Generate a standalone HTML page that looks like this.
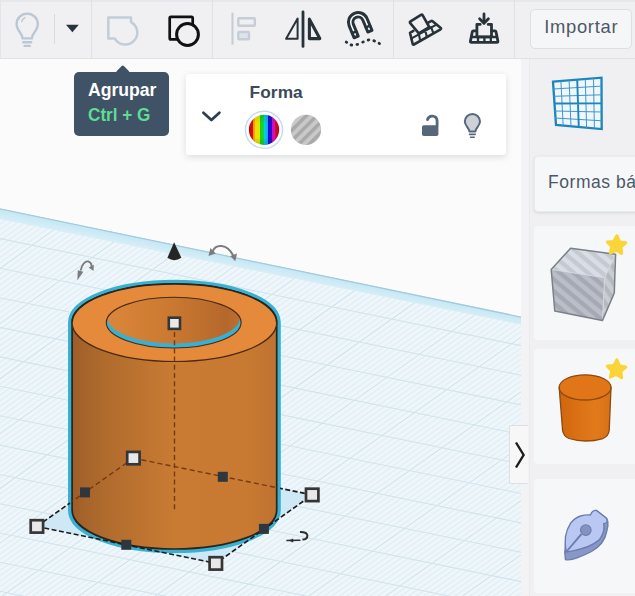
<!DOCTYPE html>
<html><head><meta charset="utf-8">
<style>
html,body{margin:0;padding:0;}
body{width:635px;height:596px;overflow:hidden;position:relative;background:#fbfbfb;font-family:"Liberation Sans",sans-serif;}
.abs{position:absolute;}
#toolbar{left:0;top:0;width:635px;height:59px;background:#f0f0f2;border-bottom:1px solid #e1e1e5;box-sizing:border-box;border-top:2px solid #e6e8ee;}
.vdiv{position:absolute;top:0;width:1px;height:58px;background:#e1e1e5;}
#viewport{left:0;top:58px;width:521px;height:538px;}
#side{left:521px;top:58px;width:114px;height:538px;background:#f0f0f2;border-left:8px solid #f3f3f5;box-sizing:border-box;}
#side:before{content:"";position:absolute;left:0;top:0;width:1px;height:538px;background:#eaeaee;}
.card{position:absolute;left:5px;width:110px;background:#f6f7f9;border-radius:4px;}
#tooltip{left:73.7px;top:72px;width:95.3px;height:64.4px;background:#3f5266;border-radius:5px;color:#fff;font-weight:bold;font-size:17px;}
#tooltip:before{content:"";position:absolute;left:44px;top:-5px;width:9.6px;height:9.6px;background:#3f5266;transform:rotate(45deg);border-radius:1.5px;}
#panel{left:186px;top:74px;width:320px;height:81px;background:#fff;border-radius:3px;box-shadow:0 2px 6px rgba(60,70,90,.17);}
#importbtn{left:530px;top:9px;width:102px;height:40px;box-sizing:border-box;border:1px solid #dcdfe4;border-radius:5px;background:#f5f6f8;color:#4d5966;font-size:18.4px;}
</style></head>
<body>
<!-- viewport -->
<svg class="abs" style="left:0;top:0" width="521" height="596" viewBox="0 0 521 596">
<defs>
<clipPath id="pl"><path d="M0 208.3L521 316.4V596H0Z"/></clipPath>
<linearGradient id="sideg" x1="0" x2="1" y1="0" y2="0">
<stop offset="0" stop-color="#9c5c29"/><stop offset="0.05" stop-color="#a5632b"/><stop offset="0.16" stop-color="#b06b2d"/><stop offset="0.5" stop-color="#c97b33"/><stop offset="0.85" stop-color="#c87a32"/><stop offset="1" stop-color="#bf7330"/>
</linearGradient>
<linearGradient id="inng" x1="0" x2="1" y1="0" y2="0">
<stop offset="0" stop-color="#da863a"/><stop offset="0.45" stop-color="#cc7a32"/><stop offset="0.9" stop-color="#b4682b"/><stop offset="1" stop-color="#bd6f2e"/>
</linearGradient>
<linearGradient id="bandg" gradientUnits="userSpaceOnUse" x1="0" y1="208.3" x2="-2.2" y2="219"><stop offset="0" stop-color="#c3e6f4"/><stop offset="1" stop-color="#d9eff8"/></linearGradient>
</defs>
<rect width="521" height="596" fill="#fbfbfb"/>
<!-- plane -->
<path d="M0 208.3L521 316.4V596H0Z" fill="#f0f7fb"/>
<g clip-path="url(#pl)">
<path d="M-2.0 596.8L4.0 598.0M-2.0 593.8L18.2 598.0M-2.0 588.0L46.5 598.0M-2.0 585.1L60.7 598.0M-2.0 582.2L74.9 598.0M-2.0 579.3L89.0 598.0M-2.0 576.4L103.2 598.0M-2.0 573.4L117.4 598.0M-2.0 570.5L131.6 598.0M-2.0 567.6L145.8 598.0M-2.0 564.7L159.9 598.0M-2.0 558.9L188.3 598.0M-2.0 556.0L202.5 598.0M-2.0 553.0L216.7 598.0M-2.0 550.1L230.9 598.0M-2.0 547.2L245.1 598.0M-2.0 544.3L259.3 598.0M-2.0 541.4L273.5 598.0M-2.0 538.4L287.7 598.0M-2.0 535.5L301.9 598.0M-2.0 529.7L330.3 598.0M-2.0 526.7L344.5 598.0M-2.0 523.8L358.7 598.0M-2.0 520.9L373.0 598.0M-2.0 518.0L387.2 598.0M-2.0 515.1L401.4 598.0M-2.0 512.1L415.6 598.0M-2.0 509.2L429.9 598.0M-2.0 506.3L444.1 598.0M-2.0 500.4L472.6 598.0M-2.0 497.5L486.8 598.0M-2.0 494.6L501.0 598.0M-2.0 491.6L515.3 598.0M-2.0 488.7L523.0 596.7M-2.0 485.8L523.0 593.7M-2.0 482.9L523.0 590.8M-2.0 479.9L523.0 587.9M-2.0 477.0L523.0 584.9M-2.0 471.1L523.0 579.1M-2.0 468.2L523.0 576.1M-2.0 465.3L523.0 573.2M-2.0 462.3L523.0 570.3M-2.0 459.4L523.0 567.3M-2.0 456.5L523.0 564.4M-2.0 453.5L523.0 561.5M-2.0 450.6L523.0 558.5M-2.0 447.7L523.0 555.6M-2.0 441.8L523.0 549.7M-2.0 438.9L523.0 546.8M-2.0 435.9L523.0 543.9M-2.0 433.0L523.0 540.9M-2.0 430.1L523.0 538.0M-2.0 427.1L523.0 535.1M-2.0 424.2L523.0 532.1M-2.0 421.2L523.0 529.2M-2.0 418.3L523.0 526.2M-2.0 412.4L523.0 520.4M-2.0 409.5L523.0 517.4M-2.0 406.5L523.0 514.5M-2.0 403.6L523.0 511.5M-2.0 400.7L523.0 508.6M-2.0 397.7L523.0 505.6M-2.0 394.8L523.0 502.7M-2.0 391.8L523.0 499.8M-2.0 388.9L523.0 496.8M-2.0 383.0L523.0 490.9M-2.0 380.1L523.0 488.0M-2.0 377.1L523.0 485.0M-2.0 374.2L523.0 482.1M-2.0 371.2L523.0 479.1M-2.0 368.3L523.0 476.2M-2.0 365.3L523.0 473.2M-2.0 362.4L523.0 470.3M-2.0 359.4L523.0 467.3M-2.0 353.5L523.0 461.4M-2.0 350.6L523.0 458.5M-2.0 347.6L523.0 455.5M-2.0 344.7L523.0 452.6M-2.0 341.7L523.0 449.6M-2.0 338.8L523.0 446.7M-2.0 335.8L523.0 443.7M-2.0 332.9L523.0 440.8M-2.0 329.9L523.0 437.8M-2.0 324.0L523.0 431.9M-2.0 321.1L523.0 429.0M-2.0 318.1L523.0 426.0M-2.0 315.2L523.0 423.1M-2.0 312.2L523.0 420.1M-2.0 309.2L523.0 417.1M-2.0 306.3L523.0 414.2M-2.0 303.3L523.0 411.2M-2.0 300.4L523.0 408.3M-2.0 294.5L523.0 402.4M-2.0 291.5L523.0 399.4M-2.0 288.5L523.0 396.4M-2.0 285.6L523.0 393.5M-2.0 282.6L523.0 390.5M-2.0 279.7L523.0 387.6M-2.0 276.7L523.0 384.6M-2.0 273.7L523.0 381.6M-2.0 270.8L523.0 378.7M-2.0 264.8L523.0 372.7M-2.0 261.9L523.0 369.8M-2.0 258.9L523.0 366.8M-2.0 256.0L523.0 363.8M-2.0 253.0L523.0 360.9M-2.0 250.0L523.0 357.9M-2.0 247.1L523.0 354.9M-2.0 244.1L523.0 352.0M-2.0 241.1L523.0 349.0M-2.0 235.2L523.0 343.1M-2.0 232.2L523.0 340.1M-2.0 229.3L523.0 337.1M-2.0 226.3L523.0 334.2M-2.0 223.3L523.0 331.2M-2.0 220.3L523.0 328.2M-2.0 217.4L523.0 325.3M-2.0 214.4L523.0 322.3M-2.0 211.4L523.0 319.3" stroke="#ecf5f9" stroke-width="0.7" fill="none"/>
<path d="M-2.0 208.9L-1.5 208.6M-2.0 220.0L10.5 211.0M-2.0 225.5L16.5 212.3M-2.0 231.1L22.5 213.5M-2.0 236.6L28.5 214.7M-2.0 242.2L34.4 215.9M-2.0 247.7L40.4 217.2M-2.0 253.3L46.4 218.4M-2.0 258.8L52.4 219.6M-2.0 264.3L58.4 220.9M-2.0 275.4L70.4 223.3M-2.0 280.9L76.4 224.6M-2.0 286.4L82.4 225.8M-2.0 292.0L88.4 227.0M-2.0 297.5L94.4 228.3M-2.0 303.0L100.4 229.5M-2.0 308.5L106.4 230.7M-2.0 314.1L112.4 232.0M-2.0 319.6L118.4 233.2M-2.0 330.6L130.4 235.7M-2.0 336.1L136.4 236.9M-2.0 341.7L142.4 238.1M-2.0 347.2L148.4 239.4M-2.0 352.7L154.4 240.6M-2.0 358.2L160.4 241.8M-2.0 363.7L166.4 243.1M-2.0 369.2L172.4 244.3M-2.0 374.7L178.4 245.5M-2.0 385.7L190.4 248.0M-2.0 391.2L196.3 249.2M-2.0 396.7L202.3 250.5M-2.0 402.2L208.3 251.7M-2.0 407.7L214.3 252.9M-2.0 413.2L220.3 254.1M-2.0 418.7L226.3 255.4M-2.0 424.2L232.3 256.6M-2.0 429.6L238.3 257.8M-2.0 440.6L250.3 260.3M-2.0 446.1L256.3 261.5M-2.0 451.6L262.3 262.8M-2.0 457.1L268.3 264.0M-2.0 462.5L274.3 265.2M-2.0 468.0L280.3 266.5M-2.0 473.5L286.3 267.7M-2.0 479.0L292.3 268.9M-2.0 484.4L298.3 270.2M-2.0 495.4L310.3 272.6M-2.0 500.8L316.3 273.9M-2.0 506.3L322.3 275.1M-2.0 511.8L328.3 276.3M-2.0 517.2L334.3 277.6M-2.0 522.7L340.3 278.8M-2.0 528.1L346.3 280.0M-2.0 533.6L352.3 281.3M-2.0 539.1L358.3 282.5M-2.0 550.0L370.3 285.0M-2.0 555.4L376.3 286.2M-2.0 560.9L382.3 287.4M-2.0 566.3L388.3 288.7M-2.0 571.8L394.3 289.9M-2.0 577.2L400.3 291.1M-2.0 582.6L406.3 292.4M-2.0 588.1L412.2 293.6M-2.0 593.5L418.2 294.8M7.0 598.0L430.2 297.3M14.7 598.0L436.2 298.5M22.3 598.0L442.2 299.7M30.0 598.0L448.2 301.0M37.6 598.0L454.2 302.2M45.3 598.0L460.2 303.4M52.9 598.0L466.2 304.7M60.6 598.0L472.2 305.9M68.2 598.0L478.2 307.1M83.6 598.0L490.2 309.6M91.2 598.0L496.2 310.8M98.9 598.0L502.2 312.1M106.5 598.0L508.2 313.3M114.2 598.0L514.2 314.5M121.9 598.0L520.2 315.8M129.5 598.0L523.0 319.3M137.2 598.0L523.0 324.8M144.9 598.0L523.0 330.2M160.2 598.0L523.0 341.2M167.9 598.0L523.0 346.7M175.5 598.0L523.0 352.1M183.2 598.0L523.0 357.6M190.9 598.0L523.0 363.1M198.5 598.0L523.0 368.5M206.2 598.0L523.0 374.0M213.9 598.0L523.0 379.5M221.5 598.0L523.0 384.9M236.9 598.0L523.0 395.9M244.6 598.0L523.0 401.3M252.2 598.0L523.0 406.8M259.9 598.0L523.0 412.2M267.6 598.0L523.0 417.7M275.3 598.0L523.0 423.1M282.9 598.0L523.0 428.6M290.6 598.0L523.0 434.0M298.3 598.0L523.0 439.5M313.6 598.0L523.0 450.4M321.3 598.0L523.0 455.8M329.0 598.0L523.0 461.3M336.7 598.0L523.0 466.7M344.4 598.0L523.0 472.1M352.0 598.0L523.0 477.6M359.7 598.0L523.0 483.0M367.4 598.0L523.0 488.4M375.1 598.0L523.0 493.9M390.5 598.0L523.0 504.7M398.2 598.0L523.0 510.1M405.8 598.0L523.0 515.6M413.5 598.0L523.0 521.0M421.2 598.0L523.0 526.4M428.9 598.0L523.0 531.8M436.6 598.0L523.0 537.3M444.3 598.0L523.0 542.7M452.0 598.0L523.0 548.1M467.4 598.0L523.0 558.9M475.1 598.0L523.0 564.3M482.8 598.0L523.0 569.7M490.5 598.0L523.0 575.2M498.2 598.0L523.0 580.6M505.8 598.0L523.0 586.0M513.5 598.0L523.0 591.4M521.2 598.0L523.0 596.8" stroke="#e2eff6" stroke-width="1.5" fill="none"/>
<path d="M-2.0 590.9L32.4 598.0M-2.0 561.8L174.1 598.0M-2.0 532.6L316.1 598.0M-2.0 503.4L458.3 598.0M-2.0 474.1L523.0 582.0M-2.0 444.7L523.0 552.7M-2.0 415.4L523.0 523.3M-2.0 385.9L523.0 493.9M-2.0 356.5L523.0 464.4M-2.0 327.0L523.0 434.9M-2.0 297.4L523.0 405.3M-2.0 267.8L523.0 375.7M-2.0 238.2L523.0 346.0M-2.0 208.5L523.0 316.3M-2.0 214.4L4.5 209.8M-2.0 269.9L64.4 222.1M-2.0 325.1L124.4 234.4M-2.0 380.2L184.4 246.8M-2.0 435.1L244.3 259.1M-2.0 489.9L304.3 271.4M-2.0 544.5L364.3 283.7M-0.6 598.0L424.2 296.0M75.9 598.0L484.2 308.4M152.5 598.0L523.0 335.7M229.2 598.0L523.0 390.4M306.0 598.0L523.0 444.9M382.8 598.0L523.0 499.3M459.7 598.0L523.0 553.5" stroke="#d1e3ec" stroke-width="1.1" fill="none"/>
<path d="M0 208.3L521 316.4V324.4L0 219.3Z" fill="url(#bandg)"/>
<path d="M0 208.8L521 316.9" stroke="#a3cbdb" stroke-width="1.5" fill="none"/>
</g>
<!-- selection footprint -->
<path d="M36.9 526.4L215.8 563.4L312.2 494.9L133.4 458.1Z" fill="#cfe8f5"/>
<!-- cylinder -->
<g>
<path d="M72.1 322.7A102.3 38.8 0 0 1 276.7 322.7V510.2A102.3 38.8 0 0 1 72.1 510.2Z" fill="#38b0d2" stroke="#38b0d2" stroke-width="8.2" stroke-linejoin="round"/>
<path d="M72.1 322.7A102.3 38.8 0 0 1 276.7 322.7V510.2A102.3 38.8 0 0 1 72.1 510.2Z" fill="none" stroke="#bfe9f6" stroke-width="10" stroke-linejoin="round" opacity=".0"/>
<path d="M72.1 322.7A102.3 38.8 0 0 1 276.7 322.7V510.2A102.3 38.8 0 0 1 72.1 510.2Z" fill="url(#sideg)" stroke="#2a241c" stroke-width="1.7"/>
<ellipse cx="174.4" cy="322.7" rx="102.3" ry="38.8" fill="#e5893b"/>
<path d="M72.1 322.7A102.3 38.8 0 0 0 276.7 322.7" fill="none" stroke="#4a2a12" stroke-width="1.2"/>
<path d="M72.1 322.7A102.3 38.8 0 0 1 276.7 322.7" fill="none" stroke="#2a241c" stroke-width="1.5"/>
<!-- hole -->
<clipPath id="hole"><ellipse cx="173.700" cy="322.600" rx="67.400" ry="25.400"/></clipPath>
<ellipse cx="173.700" cy="322.600" rx="67.400" ry="25.400" fill="#38b0d2"/>
<g clip-path="url(#hole)"><ellipse cx="173.700" cy="317.800" rx="66.200" ry="25.600" fill="url(#inng)"/></g>
<ellipse cx="173.700" cy="322.600" rx="67.400" ry="25.400" fill="none" stroke="#4a2a12" stroke-width="1.100"/>
</g>
<!-- dashed lines through object -->
<g stroke="#6e3410" stroke-width="1.4" stroke-dasharray="5 3.2" fill="none" opacity=".9">
<path d="M174.5 332V511"/>
<path d="M133.4 458.1L72 501.5"/>
<path d="M133.4 458.1L278 487.9"/>
</g>
<g stroke="#1c1c1c" stroke-width="1.6" stroke-dasharray="5 2.5" fill="none">
<path d="M36.9 526.4L215.8 563.4L312.2 494.9"/>
<path d="M36.9 526.4L70 503"/>
<path d="M312.2 494.9L280 488.3"/>
</g>
<!-- handles -->
<g fill="#2f363d">
<rect x="80" y="487.4" width="10" height="10"/>
<rect x="121.3" y="539.8" width="10" height="10"/>
<rect x="217.8" y="471.8" width="10" height="10"/>
<rect x="258.9" y="523.9" width="10" height="10"/>
</g>
<g fill="#e8e8e8" stroke="#363636" stroke-width="2.7">
<rect x="30.7" y="520.2" width="12.4" height="12.4"/>
<rect x="209.6" y="557.2" width="12.4" height="12.4"/>
<rect x="306.0" y="488.7" width="12.4" height="12.4"/>
<rect x="127.2" y="451.9" width="12.4" height="12.4"/>
<rect x="168.8" y="317.700" width="11.2" height="11.2" stroke-width="2.600"/>
</g>
<!-- cone -->
<path d="M174.1 242.2L181.4 257.8Q174.3 262.5 167.4 257.8Z" fill="#252525"/>
<!-- rotate arrows -->
<g fill="none" stroke="#7c7c7c" stroke-width="1.8">
<path d="M212.600 251.600C215.500 243.600 227 243.400 233.200 255.500" stroke-width="2"/>
<path d="M80.6 270.5Q83 261 88 261.3Q92 262.5 91.5 267"/>
</g>
<g fill="#7c7c7c">
<path d="M210.400 248L215.800 253.400L208.500 256Z"/>
<path d="M235.300 261.300L230.200 256L237 253.600Z"/>
<path d="M77.3 280.3L77.8 270.2L83.4 271.8Z"/>
<path d="M93.5 271L88.6 267.4L93.8 264.8Z"/>
</g>
<g fill="none" stroke="#2e2e2e">
<path d="M286.400 540.600L300.400 540.300" stroke-width="1.500"/>
<path d="M300 532Q306.800 531.800 307.400 535.400Q307.400 539.200 302.400 539.600" stroke-width="2"/>
</g>
<path d="M288.600 540.600L293.200 538.500V542.500Z" fill="#2e2e2e"/>
</svg>

<!-- side panel -->
<div id="side" class="abs">
 <div class="card" style="top:98px;height:56px;border:1px solid #e9ebef;box-sizing:border-box;box-shadow:0 1px 3px rgba(40,50,70,.13);"><span style="position:absolute;left:13px;top:15px;font-size:17.5px;color:#4b5868;white-space:nowrap;letter-spacing:.55px">Formas básicas</span></div>
 <div class="card" style="top:168px;height:114px;"></div>
 <div class="card" style="top:291px;height:115px;"></div>
 <div class="card" style="top:421px;height:114px;"></div>
</div>
<svg class="abs" style="left:521px;top:58px" width="114" height="538" viewBox="521 58 114 538">
<!-- workplane grid icon -->
<g fill="none" stroke="#1b85bd" stroke-linejoin="miter">
<path d="M553 81.700L601.500 77.700L601.700 129.100L556 125Z" stroke-width="2.300" fill="#f0f7fc"/>
<g stroke-width="1" stroke="#3f97cb">
<path d="M553.2 89L601.7 86.1M553.7 96.3L601.8 94.8M554.5 111L602 112M554.9 118L602.1 120.8"/>
<path d="M560.9 80.9L563.2 125.9M569.1 80.2L571 126.6M585.3 78.8L586.6 128M593.5 78.1L594.4 128.7"/>
</g>
<path d="M554.1 103.5L601.9 103.4M577.2 79.5L578.8 127.3" stroke-width="1.900"/>
</g>
<!-- box (hole style) -->
<defs>
<pattern id="bs" width="9" height="9" patternUnits="userSpaceOnUse" patternTransform="rotate(40)">
<rect width="9" height="9" fill="#b9bec7"/><rect width="9" height="4.3" fill="#a4a9b3"/>
</pattern>
<pattern id="bs2" width="9" height="9" patternUnits="userSpaceOnUse" patternTransform="rotate(40)">
<rect width="9" height="9" fill="#d9dde5"/><rect width="9" height="4.3" fill="#c4c9d2"/>
</pattern>
<pattern id="bs3" width="9" height="9" patternUnits="userSpaceOnUse" patternTransform="rotate(55)">
<rect width="9" height="9" fill="#c9ccd2"/><rect width="9" height="4.3" fill="#b4b8bf"/>
</pattern>
<linearGradient id="cyl" x1="0" x2="1" y1="0" y2="0">
<stop offset="0" stop-color="#cf6610"/><stop offset="0.3" stop-color="#d96f12"/><stop offset="0.7" stop-color="#e27a1c"/><stop offset="1" stop-color="#d8701a"/>
</linearGradient>
</defs>
<g stroke="none">
<path d="M551.2 269.5L604.6 277.8L602.4 320.6L554.8 311Z" fill="url(#bs)"/>
<path d="M551.2 269.5L570.6 248.2L615.6 254.3L604.6 277.8Z" fill="url(#bs2)"/>
<path d="M604.6 277.8L615.6 254.3L614.3 293L602.4 320.6Z" fill="url(#bs3)"/>
</g>
<path d="M551.2 269.5L604.6 277.8L602.4 320.6M604.6 277.8L615.6 254.3" fill="none" stroke="#d3d7dd" stroke-width="1.1" opacity=".85"/>
<path d="M551.2 269.5L570.6 248.2L615.6 254.3L614.3 293L602.4 320.6L554.8 311Z" fill="none" stroke="#7b8088" stroke-width="1.5" stroke-linejoin="round"/>
<path d="M616.9 235.8L619.3 241.7L625.7 242.9L620.8 247.1L621.6 253.4L616.2 250.1L610.4 252.9L611.9 246.6L607.4 242.0L613.8 241.5Z" fill="#fbd43a" stroke="#fbd43a" stroke-width="3.2" stroke-linejoin="round"/>
<!-- cylinder -->
<path d="M559.200 387.600L562.600 430.500Q563.400 436 569 438.500Q585.500 443.500 603 438.500Q608.500 436 609.200 430.500L611 387.600Z" fill="url(#cyl)" stroke="#8e4a0e" stroke-width="1.300"/>
<ellipse cx="585.100" cy="387.400" rx="25.900" ry="12.600" fill="#e07617" stroke="#8e4a0e" stroke-width="1.300"/>
<path d="M616.9 360.0L619.3 365.9L625.7 367.1L620.8 371.3L621.6 377.6L616.2 374.3L610.4 377.1L611.9 370.8L607.4 366.2L613.8 365.7Z" fill="#fbd43a" stroke="#fbd43a" stroke-width="3.2" stroke-linejoin="round"/>
<!-- scribble / pen nib -->
<g stroke-linejoin="round">
<path d="M564.8 552.4L565.5 559.6Q570 560.600 577.100 557.800Q585 555 591.500 551.500Q597.500 548 601.500 543.200Q605.500 538 606.800 531Q608.400 526 607.800 521.500L606.500 518.300L596.500 510.500L566 540Z" fill="#8797c8" stroke="#6c7cab" stroke-width="1.400"/>
<path d="M566.100 552Q564.600 544 565.500 536.500Q566.800 529 570.500 523.300Q574.500 518.200 580.500 516Q585.500 514.600 590.400 515Q591.400 512.400 593.200 511Q595 510 596.500 510.500L606.500 518.300Q607.600 520.300 607 522.100Q605.800 523.600 603.700 523.800Q604.500 527.500 603.700 531Q602.500 535.800 599.300 539.900Q594.500 543.800 588.200 546.500Q581.500 549 574.900 550.400Q570 551.600 566.100 552Z" fill="#b8c8f2" stroke="#6c7cab" stroke-width="1.400"/>
<path d="M566.600 551.500L581.400 534.200" stroke="#6c7cab" stroke-width="1.900" fill="none"/>
<circle cx="585.800" cy="530.100" r="5.300" fill="#8292c3" stroke="#6c7cab" stroke-width="1.100"/>
</g>

</svg>
<!-- collapse toggle -->
<div class="abs" style="left:509px;top:425px;width:19px;height:59px;background:#f7f7f8;border:1px solid #dedfe3;box-sizing:border-box;border-right:none;border-radius:2px 0 0 2px"></div>
<svg class="abs" style="left:509px;top:425px" width="20" height="59" viewBox="509 425 20 59"><path d="M516 442.5L523.6 455L516 467.5" fill="none" stroke="#1d1d1d" stroke-width="2.4"/></svg>

<!-- toolbar -->
<div id="toolbar" class="abs"></div>
<div class="vdiv" style="left:0px;background:#e4e4e8"></div>
<div class="vdiv" style="left:91px"></div>
<div class="vdiv" style="left:212px"></div>
<div class="vdiv" style="left:393px"></div>
<div class="vdiv" style="left:514px"></div>
<div class="abs" style="left:54px;top:14px;width:1px;height:30px;background:#d5dae0"></div>
<svg class="abs" style="left:0;top:0" width="520" height="58" viewBox="0 0 520 58">
<!-- bulb (disabled) -->
<g fill="none" stroke="#bbc8d4" stroke-width="2.4" stroke-linecap="round" stroke-linejoin="round">
<path d="M22.6 38.4C22.6 33.5 16.6 30.6 16.6 24.2A10.6 10.6 0 0 1 37.8 24.2C37.8 30.6 31.8 33.5 31.8 38.4Z"/>
<path d="M23.2 42.3H31.2M24.6 45.9H29.8"/>
<path d="M21.6 21.6Q22.4 18.8 25 17.6" stroke-width="1.4"/>
</g>
<!-- caret -->
<path d="M66 24.8H78.8L72.4 32.2Z" fill="#27333b"/>
<!-- group (disabled) -->
<path d="M108.3 17.6H131V22.04A12 12 0 1 1 114.9 38.6H108.3Z" fill="none" stroke="#c2cdd8" stroke-width="2.5" stroke-linejoin="round"/>
<!-- ungroup -->
<rect x="169.700" y="16.900" width="23" height="22.500" rx="1.200" fill="none" stroke="#111" stroke-width="2.700"/>
<circle cx="187.500" cy="34.500" r="10.900" fill="#f0f0f2" stroke="#111" stroke-width="3"/>
<!-- align (disabled) -->
<g fill="none" stroke="#c5ced8" stroke-width="2.4">
<path d="M232.500 12.700V44.700" stroke-width="2.1"/>
<rect x="238.300" y="18.200" width="16.500" height="7.600" rx=".8"/>
<rect x="238.300" y="32" width="10.700" height="7.300" rx=".8" fill="#dfe4ea"/>
</g>
<!-- mirror -->
<g fill="none" stroke="#27333b" stroke-linejoin="round" stroke-linecap="round">
<path d="M303 11.900V46.400" stroke-width="2.800"/>
<path d="M286.100 38.800H297.600V18.600Z" stroke-width="2"/>
<path d="M309.400 38.600H319.800L309.400 19.200Z" stroke-width="3.100"/>
</g>
<!-- magnet -->
<g fill="none" stroke="#27333b" stroke-linejoin="round" stroke-linecap="round">
<g transform="rotate(-22.6 358.1 22.2)">
<path d="M348.4 35V22.2A9.7 9.7 0 0 1 367.8 22.2V35H363.3V22.2A5.2 5.2 0 0 0 352.9 22.2V35Z" stroke-width="3" fill="#fff"/>
<path d="M348.4 30H352.9M363.3 30H367.8" stroke-width="2.6"/>
</g>
</g>
<g fill="#27333b">
<ellipse cx="346.5" cy="42.2" rx="1.7" ry="1.45" transform="rotate(30 346.5 42.2)"/>
<ellipse cx="351.4" cy="45" rx="1.8" ry="1.45" transform="rotate(10 351.4 45)"/>
<ellipse cx="357.3" cy="44.4" rx="1.8" ry="1.45" transform="rotate(-15 357.3 44.4)"/>
<ellipse cx="363" cy="42" rx="1.8" ry="1.45" transform="rotate(-25 363 42)"/>
<ellipse cx="368.5" cy="40" rx="1.8" ry="1.45" transform="rotate(-5 368.5 40)"/>
<ellipse cx="374.2" cy="40.9" rx="1.8" ry="1.45" transform="rotate(20 374.2 40.9)"/>
<ellipse cx="379.3" cy="43.4" rx="1.7" ry="1.45" transform="rotate(30 379.3 43.4)"/>
</g>
<!-- workplane -->
<g fill="none" stroke="#27333b" stroke-width="2.6" stroke-linejoin="round" stroke-linecap="round">
<path d="M410.2 21.6L421 14.8Q422 14.2 422.6 15.2L429.2 27L418.8 33.4L410 22.9Q409.5 22.1 410.200 21.600Z"/>
<path d="M413.4 30.8L410 32.8L412.7 44Q413 45 413.9 44.500L440.600 29.3Q441.4 28.7 440.8 28L432.600 21.2Q431.8 20.600 431 21.100L427.400 23.2"/>
<path d="M411.200 38.600L436.400 24.600M418.800 33.800L420.200 40.800M425.200 30.200L426.900 37M431 27L433.400 33.200" stroke-width="2.1"/>
</g>
<!-- ruler / drop -->
<g fill="none" stroke="#27333b" stroke-width="2.8" stroke-linejoin="round" stroke-linecap="round">
<path d="M484 14V22.600M479.600 18.800L484 23.400L488.400 18.800"/>
<path d="M480.200 24.400H476.900V36.800H491.500V24.400H488.200"/>
<path d="M476.600 30.800H473.400Q472.500 30.800 472.300 31.700L470.400 41.300Q470.200 42.400 471.300 42.400H497Q498.100 42.400 497.900 41.300L496 31.700Q495.800 30.800 494.900 30.800H491.800"/>
<path d="M471.600 37H496.800M478 37.400V42M484.400 37.400V42M490.800 37.400V42" stroke-width="2.3"/>
</g>

</svg>
<div id="importbtn" class="abs"><span style="position:absolute;left:13.2px;top:6.4px;letter-spacing:.7px">Importar</span></div>

<!-- tooltip -->
<div id="tooltip" class="abs"><span style="position:absolute;left:14.8px;top:8px;font-size:17.8px;transform:scaleX(.99);transform-origin:0 0;display:block">Agrupar</span><span style="position:absolute;left:14.6px;top:33.4px;font-size:17.6px;color:#5fdc93;white-space:nowrap;transform:scaleX(.975);transform-origin:0 0;display:block">Ctrl + G</span></div>

<!-- shape panel -->
<div id="panel" class="abs">
 <span style="position:absolute;left:63.5px;top:8.4px;font-size:17.3px;font-weight:bold;color:#3a4a5c;letter-spacing:.1px">Forma</span>
</div>
<svg class="abs" style="left:186px;top:74px" width="320" height="82" viewBox="186 74 320 82">
<defs>
<linearGradient id="rb" x1="0" x2="1" y1="0" y2="0">
<stop offset="0" stop-color="#c4000a"/><stop offset="0.13" stop-color="#d41616"/>
<stop offset="0.13" stop-color="#f08a10"/><stop offset="0.20" stop-color="#f6a80c"/>
<stop offset="0.20" stop-color="#f4d800"/><stop offset="0.36" stop-color="#e0e800"/>
<stop offset="0.36" stop-color="#18d020"/><stop offset="0.50" stop-color="#10d838"/>
<stop offset="0.50" stop-color="#10d0e0"/><stop offset="0.63" stop-color="#10a8f0"/>
<stop offset="0.63" stop-color="#1010e0"/><stop offset="0.76" stop-color="#3808c8"/>
<stop offset="0.76" stop-color="#c010d0"/><stop offset="0.88" stop-color="#e010a0"/>
<stop offset="0.88" stop-color="#d01030"/><stop offset="1" stop-color="#c00010"/>
</linearGradient>
<linearGradient id="rbshade" x1="0" x2="0" y1="0" y2="1">
<stop offset="0" stop-color="#000" stop-opacity=".12"/><stop offset="0.3" stop-color="#000" stop-opacity="0"/><stop offset="0.75" stop-color="#000" stop-opacity="0"/><stop offset="1" stop-color="#000" stop-opacity=".15"/>
</linearGradient>
<pattern id="gs" width="7.4" height="7.4" patternUnits="userSpaceOnUse" patternTransform="rotate(-45 306 130)">
<rect width="7.4" height="7.4" fill="#c9c9c9"/><rect width="7.4" height="3.5" fill="#a9a9a9"/>
</pattern>
<clipPath id="c1"><circle cx="264" cy="129.8" r="15.1"/></clipPath>
</defs>
<!-- chevron -->
<path d="M203.4 112.8L211.4 120L219.4 112.8" fill="none" stroke="#2f3f52" stroke-width="2.8" stroke-linecap="round" stroke-linejoin="round"/>
<!-- rainbow -->
<circle cx="264" cy="129.8" r="18.6" fill="#fff" stroke="#c6d8ee" stroke-width="1.4"/>
<circle cx="264" cy="129.8" r="15.1" fill="url(#rb)"/>
<circle cx="264" cy="129.8" r="15.1" fill="url(#rbshade)"/>
<!-- hole (grey striped) -->
<circle cx="306" cy="129.8" r="15.1" fill="url(#gs)"/>
<!-- lock -->
<g>
<rect x="422" y="125.200" width="16.400" height="10.800" rx="1.800" fill="#566779"/>
<path d="M427.500 119.600A4.900 4.900 0 0 1 437.100 120.800V126" fill="none" stroke="#566779" stroke-width="2.800" stroke-linecap="round"/>
</g>
<!-- bulb -->
<g stroke="#566779" stroke-width="2" stroke-linecap="round" stroke-linejoin="round">
<path d="M469.4 131.4C469.4 128 464.8 125.8 464.8 121.6A7.6 7.6 0 0 1 480 121.6C480 125.8 475.4 128 475.4 131.4Z" fill="#cdd2d8"/>
<path d="M469.6 134.4H475.2M470.6 137.2H474.2" fill="none" stroke-width="1.6"/>
</g>

</svg>
</body></html>
